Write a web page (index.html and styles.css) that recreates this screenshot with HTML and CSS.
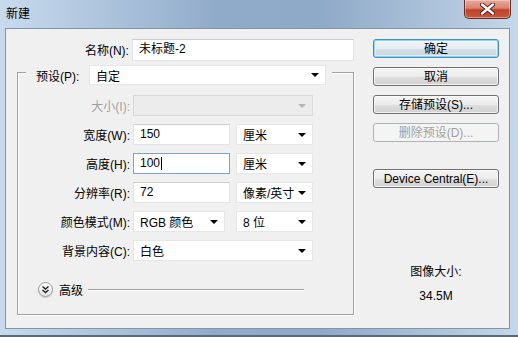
FILE: index.html
```html
<!DOCTYPE html>
<html lang="zh-CN">
<head>
  <meta charset="UTF-8">
  <title>新建</title>
  <link rel="stylesheet" href="styles.css">
</head>
<body>
  <div class="window">
    <div class="titlebar">
      <span class="title">新建</span>
      <div class="close">
        <svg width="15" height="12" viewBox="0 0 15 12">
          <path d="M2 1.5 L13 10.5 M13 1.5 L2 10.5" stroke="#4a1a12" stroke-width="4.2" stroke-linecap="round"/>
          <path d="M2 1.5 L13 10.5 M13 1.5 L2 10.5" stroke="#fff" stroke-width="2.4" stroke-linecap="round"/>
        </svg>
      </div>
    </div>

    <div class="client">
      <div class="left">
        <div class="row">
          <label class="lbl name-lbl">名称(N):</label>
          <div class="input name-input">未标题-2</div>
        </div>

        <div class="group">
          <div class="group-head">
            <label class="head-lbl">预设(P):</label>
            <div class="combo preset"><span>自定</span><i class="arrow"></i></div>
          </div>

          <div class="fields">
            <div class="row">
              <label class="lbl disabled">大小(I):</label>
              <div class="combo wide off"><span></span><i class="arrow"></i></div>
            </div>
            <div class="row">
              <label class="lbl">宽度(W):</label>
              <div class="input num">150</div>
              <div class="combo unit"><span>厘米</span><i class="arrow"></i></div>
            </div>
            <div class="row">
              <label class="lbl">高度(H):</label>
              <div class="input num focus">100<b class="caret"></b></div>
              <div class="combo unit"><span>厘米</span><i class="arrow"></i></div>
            </div>
            <div class="row">
              <label class="lbl">分辨率(R):</label>
              <div class="input num">72</div>
              <div class="combo unit"><span>像素/英寸</span><i class="arrow"></i></div>
            </div>
            <div class="row">
              <label class="lbl">颜色模式(M):</label>
              <div class="combo mode"><span>RGB 颜色</span><i class="arrow"></i></div>
              <div class="combo unit bits"><span>8 位</span><i class="arrow"></i></div>
            </div>
            <div class="row">
              <label class="lbl">背景内容(C):</label>
              <div class="combo wide"><span>白色</span><i class="arrow"></i></div>
            </div>
          </div>

          <div class="advanced">
            <span class="chevron">
              <svg width="9" height="9" viewBox="0 0 9 9">
                <path d="M1.5 1.5 L4.5 4 L7.5 1.5 M1.5 5 L4.5 7.5 L7.5 5" fill="none" stroke="#222" stroke-width="1.5"/>
              </svg>
            </span>
            <span class="adv-text">高级</span>
            <span class="adv-line"></span>
          </div>
        </div>
      </div>

      <div class="right">
        <button class="btn default">确定</button>
        <button class="btn">取消</button>
        <button class="btn">存储预设(S)...</button>
        <button class="btn" disabled>删除预设(D)...</button>
        <button class="btn device">Device Central(E)...</button>
        <div class="size-info">
          <p>图像大小:</p>
          <p>34.5M</p>
        </div>
      </div>
    </div>
  </div>
</body>
</html>
```

FILE: styles.css
```css
* { box-sizing: border-box; margin: 0; padding: 0; }
body {
  font-family: "Liberation Sans", "Noto Sans CJK SC", sans-serif;
  font-size: 12px;
  color: #000;
  background: #fff;
}
.window {
  width: 518px;
  height: 337px;
  display: flex;
  flex-direction: column;
  padding: 0 8px 6px 5px;
  background: linear-gradient(to right, #c8dbee 0%, #b0c6de 18%, #90abca 42%, #8fa9c8 62%, #aec4dc 85%, #c5d8eb 100%);
  border-bottom: 2px solid #5b6877;
}
.titlebar {
  height: 28px;
  display: flex;
  align-items: flex-start;
}
.title {
  font-size: 12px;
  line-height: 16px;
  margin: 6px 0 0 1px;
}
.close {
  margin-left: auto;
  margin-right: -1px;
  width: 47px;
  height: 19px;
  border: 1px solid #6b2b22;
  border-top: none;
  border-radius: 0 0 5px 5px;
  background: linear-gradient(#e9a99a 0%, #d9836f 45%, #c0402a 55%, #c95a40 100%);
  box-shadow: inset 0 0 0 1px rgba(255,255,255,0.35);
  display: flex;
  align-items: center;
  justify-content: center;
}
.client {
  flex: 1;
  display: flex;
  background: #f0f0f0;
  border: 1px solid #8393a8;
  padding-top: 10px;
}
.left { width: 348px; }
.row {
  display: flex;
  align-items: center;
  height: 21px;
}
.lbl {
  text-align: right;
  width: 112px;
  margin-right: 3px;
  white-space: nowrap;
}
.name-lbl { width: 124px; }
.disabled { color: #a0a0a0; }
.input {
  height: 21px;
  background: #fff;
  border: 1px solid #e0e3e8;
  border-top-color: #c9ccd2;
  padding: 0 6px;
  line-height: 19px;
  display: flex;
  align-items: center;
}
.name-input { width: 224px; height: 22px; }
.num { width: 97px; }
.focus { border-color: #7da2ce; }
.caret {
  width: 1px;
  height: 13px;
  background: #000;
  margin-left: 1px;
}
.combo {
  height: 21px;
  background: #fff;
  border: 1px solid #e6e6e6;
  display: flex;
  align-items: center;
  padding: 0 6px;
}
.combo span { flex: 1; white-space: nowrap; }
.arrow {
  width: 0;
  height: 0;
  border-left: 4px solid transparent;
  border-right: 4px solid transparent;
  border-top: 4px solid #000;
}
.wide { width: 180px; }
.unit { width: 77px; margin-left: 6px; }
.mode { width: 92px; }
.bits { margin-left: 11px; }
.off { background: #ececec; border-color: #d9d9d9; }
.off .arrow { border-top-color: #b5b5b5; }
.group {
  margin: 12px 0 0 11px;
  width: 337px;
  height: 243px;
  border: 1px solid #a0a0a0;
  box-shadow: 1px 1px 0 #fff, inset 1px 1px 0 #fff;
}
.group-head {
  display: flex;
  align-items: center;
  width: fit-content;
  margin: -8px 0 0 8px;
  padding: 0 6px 0 10px;
  background: #f0f0f0;
  height: 20px;
}
.head-lbl { width: 53px; white-space: nowrap; }
.preset { width: 237px; height: 20px; }
.fields {
  display: flex;
  flex-direction: column;
  gap: 8px;
  margin-top: 10px;
}
.advanced {
  display: flex;
  align-items: center;
  margin: 21px 0 0 20px;
  height: 15px;
}
.chevron {
  width: 15px;
  height: 15px;
  border-radius: 50%;
  border: 1px solid #9a9a9a;
  background: linear-gradient(#ffffff, #e2e2e2);
  box-shadow: 0 1px 1px rgba(0,0,0,0.15);
  display: flex;
  align-items: center;
  justify-content: center;
}
.adv-text { margin-left: 6px; }
.adv-line {
  width: 216px;
  height: 1px;
  background: #a0a0a0;
  margin-left: 5px;
  box-shadow: 0 1px 0 #fff;
}
.right {
  width: 126px;
  margin-left: 19px;
  display: flex;
  flex-direction: column;
  gap: 9px;
}
.btn {
  height: 19px;
  font: inherit;
  color: #000;
  border: 1px solid #707070;
  border-radius: 3px;
  background: linear-gradient(#f4f4f4 0%, #ececec 50%, #dedede 51%, #d2d2d2 100%);
  box-shadow: inset 0 0 0 1px rgba(255,255,255,0.7);
  line-height: 16px;
}
.default {
  border-color: #3c8fc8;
  box-shadow: inset 0 0 0 1px #8fd2f2, inset 0 0 0 2px rgba(255,255,255,0.5);
  background: linear-gradient(#eef5f9 0%, #e4edf2 50%, #d3e0e8 51%, #c6d6e0 100%);
}
.btn:disabled {
  color: #a0a0a0;
  border-color: #adb2b5;
  background: #f4f4f4;
  box-shadow: none;
}
.device { margin-top: 18px; }
.size-info {
  margin-top: 67px;
  text-align: center;
  line-height: 16px;
}
.size-info p + p { margin-top: 8px; }
```
